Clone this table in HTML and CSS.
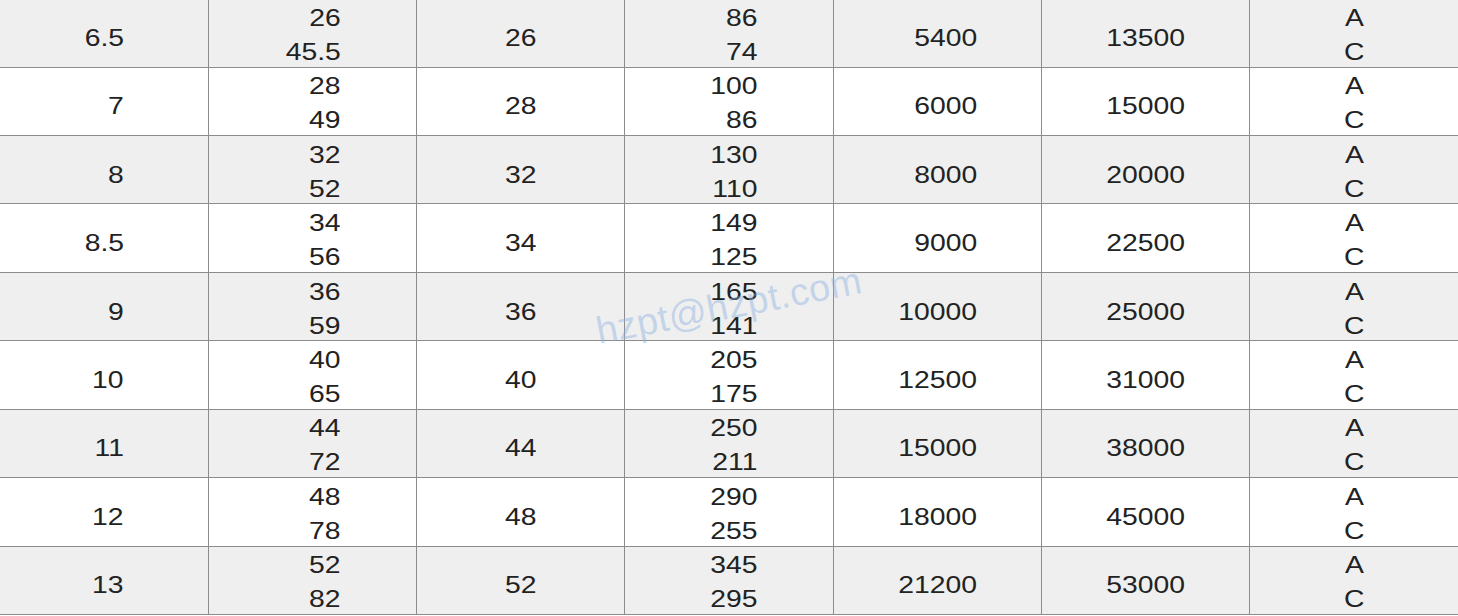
FILE: index.html
```html
<!DOCTYPE html>
<html>
<head>
<meta charset="utf-8">
<link rel="stylesheet" href="styles.css">
</head>
<body>
<div class="wrap">
<table class="spec">
<colgroup>
<col class="c"><col class="c"><col class="c"><col class="c"><col class="c"><col class="c"><col class="c">
</colgroup>
<tbody>
<tr class="shade"><td class="c1 one"><span class="v">6.5</span></td><td class="c2"><span class="v">26<br>45.5</span></td><td class="c3 one"><span class="v">26</span></td><td class="c4"><span class="v">86<br>74</span></td><td class="c5 one"><span class="v">5400</span></td><td class="c6 one"><span class="v">13500</span></td><td class="c7"><span class="v">A<br>C</span></td></tr>
<tr><td class="c1 one"><span class="v">7</span></td><td class="c2"><span class="v">28<br>49</span></td><td class="c3 one"><span class="v">28</span></td><td class="c4"><span class="v">100<br>86</span></td><td class="c5 one"><span class="v">6000</span></td><td class="c6 one"><span class="v">15000</span></td><td class="c7"><span class="v">A<br>C</span></td></tr>
<tr class="shade"><td class="c1 one"><span class="v">8</span></td><td class="c2"><span class="v">32<br>52</span></td><td class="c3 one"><span class="v">32</span></td><td class="c4"><span class="v">130<br>110</span></td><td class="c5 one"><span class="v">8000</span></td><td class="c6 one"><span class="v">20000</span></td><td class="c7"><span class="v">A<br>C</span></td></tr>
<tr><td class="c1 one"><span class="v">8.5</span></td><td class="c2"><span class="v">34<br>56</span></td><td class="c3 one"><span class="v">34</span></td><td class="c4"><span class="v">149<br>125</span></td><td class="c5 one"><span class="v">9000</span></td><td class="c6 one"><span class="v">22500</span></td><td class="c7"><span class="v">A<br>C</span></td></tr>
<tr class="shade"><td class="c1 one"><span class="v">9</span></td><td class="c2"><span class="v">36<br>59</span></td><td class="c3 one"><span class="v">36</span></td><td class="c4"><span class="v">165<br>141</span></td><td class="c5 one"><span class="v">10000</span></td><td class="c6 one"><span class="v">25000</span></td><td class="c7"><span class="v">A<br>C</span></td></tr>
<tr><td class="c1 one"><span class="v">10</span></td><td class="c2"><span class="v">40<br>65</span></td><td class="c3 one"><span class="v">40</span></td><td class="c4"><span class="v">205<br>175</span></td><td class="c5 one"><span class="v">12500</span></td><td class="c6 one"><span class="v">31000</span></td><td class="c7"><span class="v">A<br>C</span></td></tr>
<tr class="shade"><td class="c1 one"><span class="v">11</span></td><td class="c2"><span class="v">44<br>72</span></td><td class="c3 one"><span class="v">44</span></td><td class="c4"><span class="v">250<br>211</span></td><td class="c5 one"><span class="v">15000</span></td><td class="c6 one"><span class="v">38000</span></td><td class="c7"><span class="v">A<br>C</span></td></tr>
<tr><td class="c1 one"><span class="v">12</span></td><td class="c2"><span class="v">48<br>78</span></td><td class="c3 one"><span class="v">48</span></td><td class="c4"><span class="v">290<br>255</span></td><td class="c5 one"><span class="v">18000</span></td><td class="c6 one"><span class="v">45000</span></td><td class="c7"><span class="v">A<br>C</span></td></tr>
<tr class="shade"><td class="c1 one"><span class="v">13</span></td><td class="c2"><span class="v">52<br>82</span></td><td class="c3 one"><span class="v">52</span></td><td class="c4"><span class="v">345<br>295</span></td><td class="c5 one"><span class="v">21200</span></td><td class="c6 one"><span class="v">53000</span></td><td class="c7"><span class="v">A<br>C</span></td></tr>
</tbody>
</table>
<div class="mark">hzpt@hzpt.com</div>
</div>
</body>
</html>
```
FILE: styles.css
```css
html, body {
  margin: 0;
  padding: 0;
  background: #ffffff;
}
.wrap {
  position: relative;
  width: 1458px;
  height: 616px;
  overflow: hidden;
}
.spec {
  width: 1458px;
  border-collapse: collapse;
  table-layout: fixed;
  font-family: "Liberation Sans", Arial, sans-serif;
  font-size: 23px;
  color: #222222;
}
.spec col.c {
  width: 208.28px;
}
.spec tr {
  height: 68.45px;
}
.spec tr:first-child {
  height: 67px;
}
.spec tr.shade {
  background: #efefef;
}
.spec td {
  border: 1px solid #8c8c8c;
  line-height: 34px;
  padding: 0;
  vertical-align: middle;
  white-space: nowrap;
}
.spec tr:first-child td {
  border-top: none;
}
.spec td:first-child {
  border-left: none;
}
.spec td:last-child {
  border-right: none;
}
.spec td.one {
  padding-top: 10px;
}
.v {
  display: inline-block;
  vertical-align: top;
  margin: 1px 0 -3px 0;
  transform: scaleX(1.23);
  transform-origin: right center;
}
.spec td.one .v {
  margin: 0;
}
.c3 .v, .c7 .v {
  transform-origin: center center;
}
.c1 { text-align: right; padding-right: 84px !important; }
.c2 { text-align: right; padding-right: 75px !important; }
.c3 { text-align: center; }
.c4 { text-align: right; padding-right: 75px !important; }
.c5 { text-align: right; padding-right: 64px !important; }
.c6 { text-align: right; padding-right: 64px !important; }
.c7 { text-align: center; }
.mark {
  position: absolute;
  left: 729px;
  top: 306px;
  transform: translate(-50%, -50%) rotate(-11deg);
  font-family: "Liberation Sans", Arial, sans-serif;
  font-size: 38px;
  letter-spacing: 0.4px;
  color: rgba(140, 175, 225, 0.45);
  white-space: nowrap;
  pointer-events: none;
}
```
